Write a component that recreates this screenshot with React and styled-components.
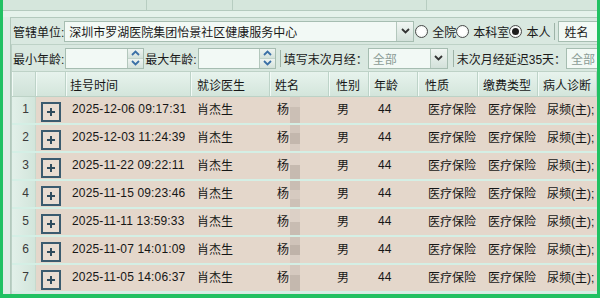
import React from 'react';
import styled, { createGlobalStyle } from 'styled-components';

const Global = createGlobalStyle`
  html, body { margin: 0; padding: 0; }
  body {
    font-family: "Liberation Sans", "Noto Sans CJK SC", sans-serif;
    font-size: 12px;
    color: #1f1f1f;
    background: #e2f0e8;
  }
`;

const Frame = styled.div`
  width: 600px;
  height: 298px;
  box-sizing: border-box;
  border-left: 3px solid #21c162;
  border-right: 3px solid #21c162;
  border-bottom: 4px solid #21c162;
  background: #e2f0e8;
  display: flex;
  flex-direction: column;
  overflow: hidden;
`;

const TopStrip = styled.div`
  height: 10px;
  flex: none;
  display: flex;
  background: #d5e6dc;
  border-bottom: 1px solid #b4cabe;
`;

const TopCell = styled.div`
  flex: ${p => (p.$w ? 'none' : '1')};
  width: ${p => (p.$w ? `${p.$w}px` : 'auto')};
  box-sizing: border-box;
  border-right: ${p => (p.$w ? '1px solid #b7cdc1' : 'none')};
`;

const Band = styled.div`
  height: 6px;
  flex: none;
  background: #e5f2eb;
`;

const Body = styled.div`
  flex: 1;
  display: flex;
  padding-left: 7px;
  min-height: 0;
  background: #dfede5;
`;

const Panel = styled.div`
  flex: 1;
  min-width: 0;
  display: flex;
  flex-direction: column;
  border-left: 1px solid #b3c9bd;
  border-top: 1px solid #b3c9bd;
  background: #d9e8e0;
`;

const Lower = styled.div`
  flex: 1;
  display: flex;
  flex-direction: column;
  border-left: 1px solid #bcd1c6;
  min-height: 0;
`;

const FormRow = styled.div`
  height: 26px;
  flex: none;
  display: flex;
  align-items: center;
  padding-left: ${p => p.$pad}px;
  border-bottom: 1px solid #bed2c7;
  white-space: nowrap;
`;

const Label = styled.span`
  font-size: 12px;
  color: #1a1a1a;
  margin-left: ${p => p.$ml || 0}px;
  flex: none;
`;

const Box = styled.div`
  display: flex;
  flex: none;
  box-sizing: border-box;
  width: ${p => p.$w}px;
  height: ${p => p.$h}px;
  margin-left: ${p => p.$ml || 0}px;
  border: 1px solid #a6bdb1;
  background: #f2f9f5;
`;

const BoxText = styled.span`
  flex: 1;
  padding-left: ${p => p.$pl || 4}px;
  display: flex;
  align-items: center;
  color: ${p => p.$c || '#1a1a1a'};
  overflow: hidden;
`;

const ArrowBtn = styled.div`
  width: 16px;
  flex: none;
  border-left: 1px solid #b3c7bc;
  background: linear-gradient(#f1f6f3, #d3e1da);
  display: flex;
  align-items: center;
  justify-content: center;
`;

const Spinner = styled.div`
  width: 15px;
  flex: none;
  border-left: 1px solid #b3c7bc;
  display: flex;
  flex-direction: column;
`;

const SpinHalf = styled.div`
  flex: 1;
  display: flex;
  align-items: center;
  justify-content: center;
  background: linear-gradient(#eef4f1, #d4e2db);
  & + & { border-top: 1px solid #c3d4cb; }
`;

const Radio = styled.span`
  width: 13px;
  height: 13px;
  flex: none;
  box-sizing: border-box;
  border-radius: 50%;
  border: 1px solid #4b4b4b;
  background: radial-gradient(circle, #ffffff 40%, #e4ebe7 100%);
  margin-left: ${p => p.$ml || 0}px;
  display: flex;
  align-items: center;
  justify-content: center;
  &::after {
    content: '';
    width: 7px;
    height: 7px;
    border-radius: 50%;
    background: ${p => (p.$on ? '#1d1d1d' : 'transparent')};
  }
`;

const Sep = styled.span`
  width: 1px;
  height: 17px;
  flex: none;
  background: #9db3a7;
  margin: 0 ${p => p.$mr}px 0 ${p => p.$ml}px;
`;

const cols = [
  { w: 24 },
  { w: 30 },
  { w: 125, label: '挂号时间', hp: 4, bp: 6 },
  { w: 79, label: '就诊医生', hp: 6, bp: 6 },
  { w: 59, label: '姓名', hp: 5, bp: 7 },
  { w: 40, label: '性别', hp: 7, bp: 8 },
  { w: 49, label: '年龄', hp: 5, bp: 9 },
  { w: 60, label: '性质', hp: 7, bp: 10 },
  { w: 60, label: '缴费类型', hp: 5, bp: 10 },
  { w: 0, label: '病人诊断', hp: 5, bp: 9 },
];

const template = cols.map(c => (c.w ? `${c.w}px` : '1fr')).join(' ');

const HeaderRow = styled.div`
  display: grid;
  grid-template-columns: ${template};
  height: 24px;
  flex: none;
  border-bottom: 1px solid #bcd2c6;
  background: linear-gradient(#e7f3ed, #d3e5db);
`;

const HeadCell = styled.div`
  box-sizing: border-box;
  border-right: 1px solid #bdd3c8;
  box-shadow: inset 1px 0 0 #f2faf6;
  padding-left: ${p => p.$pl || 0}px;
  display: flex;
  align-items: center;
  color: #161616;
  white-space: nowrap;
  overflow: hidden;
  background: ${p => (p.$dark ? 'linear-gradient(#e0eee7, #cfe2d8)' : 'transparent')};
`;

const DataRow = styled.div`
  display: grid;
  grid-template-columns: ${template};
  height: 26px;
  flex: none;
  border-bottom: 2px solid #d4efe5;
  background: #e4d7cb;
`;

const NumCell = styled.div`
  background: linear-gradient(90deg, #e2f0e9, #d2e5db);
  border-right: 1px solid #c6dace;
  display: flex;
  align-items: center;
  justify-content: flex-end;
  padding: 0 6px 3px 0;
  color: #3a3a3a;
`;

const ExpandCell = styled.div`
  display: flex;
  align-items: flex-start;
  justify-content: center;
  padding-top: 5px;
`;

const ExpandBtn = styled.div`
  width: 20px;
  height: 20px;
  box-sizing: border-box;
  border: 2px solid #3b5b6f;
  background: #e9ddd2;
  display: flex;
  align-items: center;
  justify-content: center;
`;

const Cell = styled.div`
  display: flex;
  align-items: center;
  padding: 0 0 3px ${p => p.$pl}px;
  white-space: nowrap;
  overflow: hidden;
  color: #161616;
  letter-spacing: ${p => p.$ls || 0}px;
`;

const Mosaic = styled.span`
  width: 10px;
  align-self: stretch;
  margin: 0 0 -3px 1px;
  flex: none;
  background: ${p => p.$bg};
`;

const mosaics = [
  'linear-gradient(#d9cdc3 0 40%, #cbbfb5 40% 100%)',
  'linear-gradient(#d2c6bc 0 30%, #c3b7ad 30% 75%, #d8ccc2 75%)',
  'linear-gradient(#dfd3c9 0 45%, #c6bab0 45% 100%)',
  'linear-gradient(#c9bdb3 0 35%, #d6cac0 35% 70%, #cdc1b7 70%)',
  'linear-gradient(#dcd0c6 0 50%, #c8bcb2 50% 100%)',
  'linear-gradient(#cfc3b9 0 30%, #bfb3a9 30% 70%, #d9cdc3 70%)',
  'linear-gradient(#d5c9bf 0 40%, #c4b8ae 40% 100%)',
];

const rows = [
  ['1', '2025-12-06 09:17:31'],
  ['2', '2025-12-03 11:24:39'],
  ['3', '2025-11-22 09:22:11'],
  ['4', '2025-11-15 09:23:46'],
  ['5', '2025-11-11 13:59:33'],
  ['6', '2025-11-07 14:01:09'],
  ['7', '2025-11-05 14:06:37'],
];

const Chevron = ({ dir = 'down', color = '#333' }) => (
  <svg width="9" height="6" viewBox="0 0 9 6">
    <path
      d={dir === 'down' ? 'M1 1 L4.5 4.5 L8 1' : 'M1 5 L4.5 1.5 L8 5'}
      fill="none"
      stroke={color}
      strokeWidth="1.8"
    />
  </svg>
);

const Plus = () => (
  <svg width="10" height="10" viewBox="0 0 10 10">
    <path d="M5 1 V9 M1 5 H9" stroke="#2f4c5e" strokeWidth="2" />
  </svg>
);

const SpinInput = ({ w, ml }) => (
  <Box $w={w} $h={21} $ml={ml}>
    <BoxText />
    <Spinner>
      <SpinHalf><Chevron dir="up" color="#3a6fa6" /></SpinHalf>
      <SpinHalf><Chevron dir="down" color="#3a6fa6" /></SpinHalf>
    </Spinner>
  </Box>
);

export default function App() {
  return (
    <>
      <Global />
      <Frame>
        <TopStrip>
          <TopCell $w={144} />
          <TopCell $w={86} />
          <TopCell $w={194} />
          <TopCell />
        </TopStrip>
        <Band />
        <Body>
          <Panel>
            <FormRow $pad={2}>
              <Label>管辖单位:</Label>
              <Box $w={350} $h={21}>
                <BoxText $pl={4}>深圳市罗湖医院集团怡景社区健康服务中心</BoxText>
                <ArrowBtn><Chevron /></ArrowBtn>
              </Box>
              <Radio $ml={1} />
              <Label $ml={4}>全院</Label>
              <Radio />
              <Label $ml={4}>本科室</Label>
              <Radio $on />
              <Label $ml={4}>本人</Label>
              <Sep $ml={4} $mr={3} />
              <Box $w={70} $h={21}>
                <BoxText $pl={5}>姓名</BoxText>
              </Box>
            </FormRow>
            <Lower>
              <FormRow $pad={1}>
                <Label>最小年龄:</Label>
                <SpinInput w={79} ml={1} />
                <Label $ml={1}>最大年龄:</Label>
                <SpinInput w={78} ml={1} />
                <Sep $ml={4} $mr={3} />
                <Label>填写末次月经：</Label>
                <Box $w={80} $h={21}>
                  <BoxText $c="#8b9c95">全部</BoxText>
                  <ArrowBtn><Chevron /></ArrowBtn>
                </Box>
                <Sep $ml={5} $mr={3} />
                <Label>末次月经延迟35天：</Label>
                <Box $w={60} $h={21}>
                  <BoxText $c="#8b9c95">全部</BoxText>
                </Box>
              </FormRow>
              <HeaderRow>
                {cols.map((c, i) => (
                  <HeadCell key={i} $pl={c.hp} $dark={i === 0}>
                    {c.label}
                  </HeadCell>
                ))}
              </HeaderRow>
              {rows.map(([n, t], i) => (
                <DataRow key={n}>
                  <NumCell>{n}</NumCell>
                  <ExpandCell>
                    <ExpandBtn><Plus /></ExpandBtn>
                  </ExpandCell>
                  <Cell $pl={cols[2].bp} $ls={0.15}>{t}</Cell>
                  <Cell $pl={cols[3].bp}>肖杰生</Cell>
                  <Cell $pl={cols[4].bp}>
                    杨<Mosaic $bg={mosaics[i]} />
                  </Cell>
                  <Cell $pl={cols[5].bp}>男</Cell>
                  <Cell $pl={cols[6].bp}>44</Cell>
                  <Cell $pl={cols[7].bp}>医疗保险</Cell>
                  <Cell $pl={cols[8].bp}>医疗保险</Cell>
                  <Cell $pl={cols[9].bp}>尿频(主);</Cell>
                </DataRow>
              ))}
            </Lower>
          </Panel>
        </Body>
      </Frame>
    </>
  );
}
